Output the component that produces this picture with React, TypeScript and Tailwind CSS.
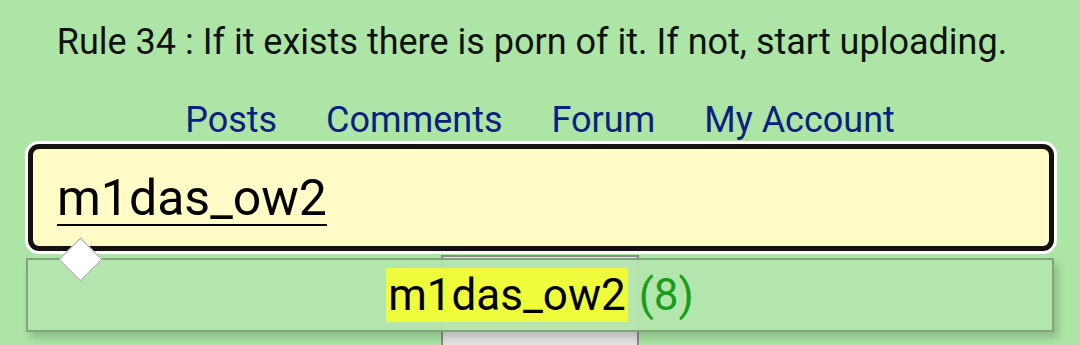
import React from "react";

export default function App() {
  return (
    <div
      className="relative h-[345px] w-[1080px] overflow-hidden bg-[#ace5a5] text-black"
      style={{ fontFamily: "Roboto, 'Noto Sans', sans-serif" }}
    >
      <div className="pr-[16px] pt-[21px] text-center text-[36px] leading-[42px] text-[#111]">
        Rule 34 : If it exists there is porn of it. If not, start uploading.
      </div>
      <nav className="mt-[36px] flex justify-center gap-[49px] text-[36px] leading-[42px] text-[#0b1f80]">
        <a>Posts</a>
        <a>Comments</a>
        <a>Forum</a>
        <a>My Account</a>
      </nav>
      <div className="relative">
        <div className="ml-[25px] mr-[23px] h-[113px] rounded-[14px] bg-white p-[3px]">
          <div className="flex h-full items-center rounded-[11px] border-[5px] border-[#141210] bg-[#fffcc8] pl-[24px]">
            <span className="text-[50px] leading-[54px] underline decoration-2 underline-offset-[9px]">
              m1das_ow2
            </span>
          </div>
        </div>
        <div className="ml-[441px] mt-[1px] h-[120px] w-[198px] border-x-2 border-t-2 border-[#8a8a8a] bg-[#e4e4e4]" />
        <div className="absolute left-[26px] top-[117px] flex h-[74px] w-[1028px] items-center justify-center gap-[11px] border-2 border-[#7fa679] bg-[#b3e6ad]/95 shadow-[4px_6px_8px_rgba(0,0,0,0.18)]">
          <span className="bg-[#eefc3c] px-[2px] text-[44px] leading-[54px]">m1das_ow2</span>
          <span className="text-[44px] leading-[54px] text-[#1a9d1a]">(8)</span>
        </div>
        <div className="absolute left-[65px] top-[103px] h-[31px] w-[31px] rotate-45 border border-[#aaa] bg-white" />
      </div>
    </div>
  );
}
